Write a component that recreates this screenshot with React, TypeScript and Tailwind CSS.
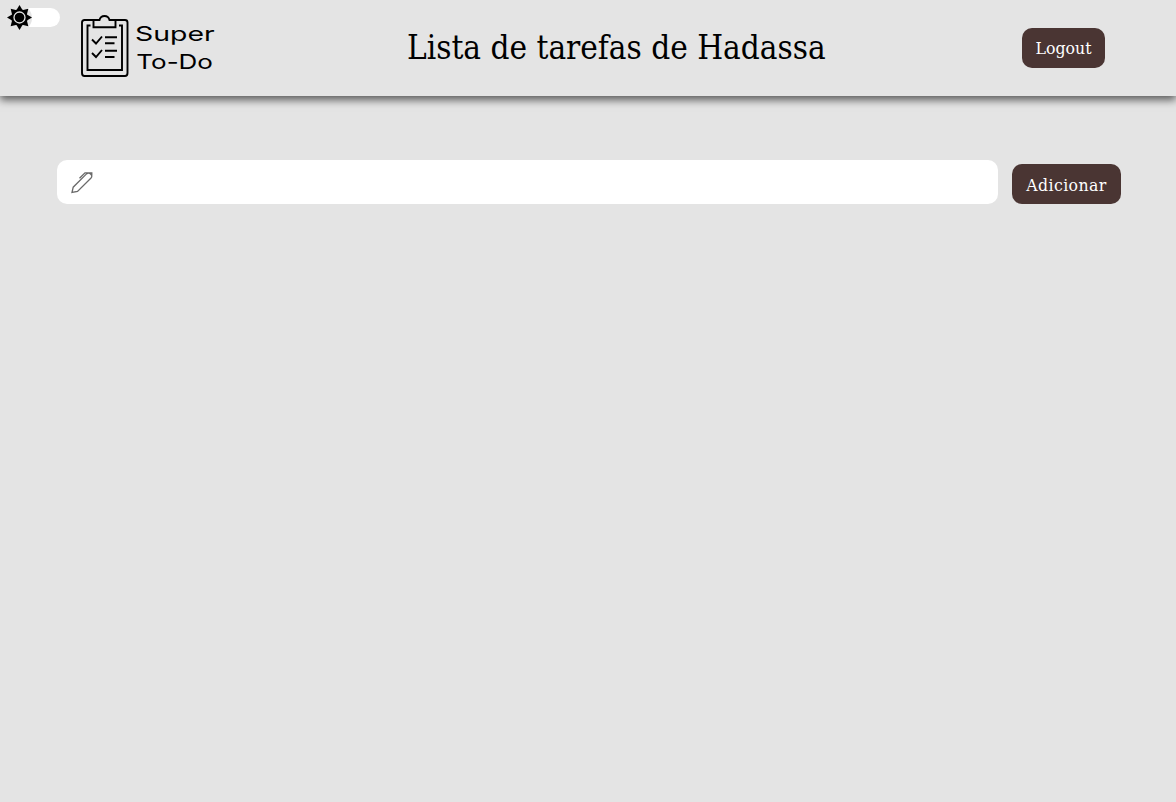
import React from 'react';

const serif = "font-['Roboto_Slab','DejaVu_Serif_Condensed','DejaVu_Serif',serif] [font-stretch:condensed]";

function ClipboardIcon() {
  return (
    <svg width="48" height="62" viewBox="0 0 48 62" fill="none" stroke="#000" strokeWidth="1.9" className="shrink-0">
      <path d="M13 5H3.500Q1 5 1 7.500V58Q1 61 3.500 61H44Q46.500 61 46.500 58V7.500Q46.500 5 44 5H34.500" />
      <path d="M9.500 10.500H6.500V55H41V10.500H38" />
      <path d="M12.500 5H18.500Q19.500 1 23.500 1T28.500 5H34.500V12.300H12.500Z" />
      <path d="M11 24.500L15 28.500L21 21.500M11 38L15 42L21 35M24 22.300H36M24 28.200H33.500M24 35.800H36M24 42H33.500" />
    </svg>
  );
}

function SunIcon() {
  return (
    <svg width="26" height="26" viewBox="-13.5 -12.5 26 26">
      {[0, 45, 90, 135, 180, 225, 270, 315].map((a) => (
        <path key={a} d="M0 -12.500L3.300 -7H-3.300Z" transform={`rotate(${a})`} />
      ))}
      <circle r="8.300" />
      <circle r="5.500" fill="none" stroke="#e4e4e4" strokeWidth="1.300" />
    </svg>
  );
}

function PencilIcon() {
  return (
    <svg width="22" height="22" viewBox="0 0 22 22" fill="none" stroke="#6a6a6a" strokeWidth="1.300">
      <path d="M1 20.500L2.200 15.200L15.500 1.900Q17.800 .3 19.800 2.200T19.800 6.200L6.500 19.500ZM8.500 6.300L14 .8H20.800V3.500" />
    </svg>
  );
}

export default function App() {
  return (
    <div className={`relative min-h-[802px] w-full overflow-hidden bg-[#e4e4e4] text-black ${serif}`}>
      <button className="absolute left-[6px] top-[8px] flex h-[19px] w-[54px] items-center rounded-full bg-white" aria-label="Tema">
        <span className="flex h-[26px] w-[26px] shrink-0 rounded-full bg-[#e4e4e4]"><SunIcon /></span>
      </button>
      <header className="flex h-24 items-center pl-[81px] pr-[71px] shadow-[0_4px_8px_rgba(0,0,0,0.6)]">
        <div className="flex w-[280px] shrink-0 items-center gap-[6px] pb-1">
          <ClipboardIcon />
          <div className="flex flex-col pt-[3px] font-['Inter',sans-serif] text-[20px] font-normal leading-[28px]">
            <span className="w-fit origin-left scale-x-142 whitespace-nowrap">Super</span>
            <span className="w-fit origin-left scale-x-130 whitespace-nowrap pl-[1px]">To-Do</span>
          </div>
        </div>
        <h1 className="ml-[46px] whitespace-nowrap text-[33px] leading-[42px]">Lista de tarefas de Hadassa</h1>
        <button className="ml-auto h-10 w-[83px] rounded-[10px] bg-[#4a3533] pt-px text-[17.5px] text-white">Logout</button>
      </header>
      <main className="mt-16 flex items-end gap-[14px] pl-[57px]">
        <label className="flex h-11 w-[941px] items-center rounded-[10px] bg-white pl-[14px] pt-px">
          <PencilIcon />
          <input className="ml-3 flex-1 bg-transparent outline-none" />
        </label>
        <button className="h-10 w-[109px] rounded-[10px] bg-[#4a3533] pt-0.5 text-[17.5px] tracking-[0.4px] text-white">Adicionar</button>
      </main>
    </div>
  );
}
